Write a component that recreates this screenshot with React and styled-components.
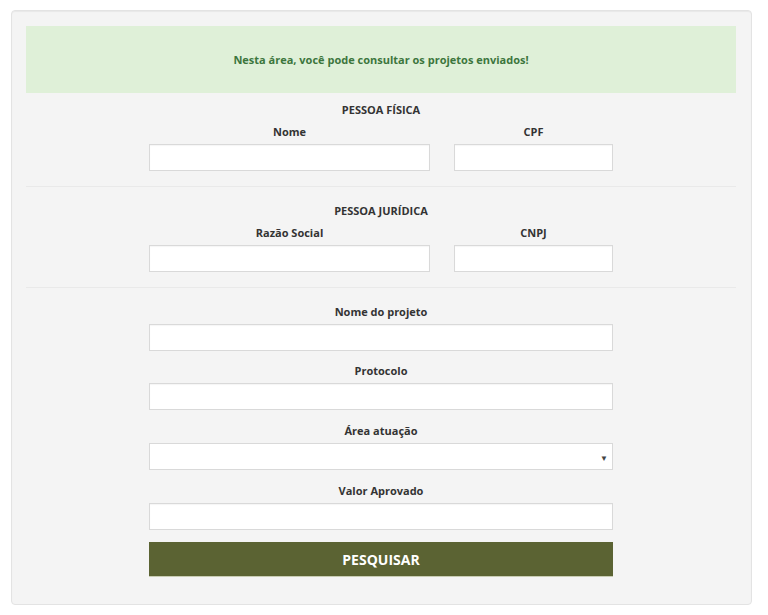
import React from 'react'
import styled, { createGlobalStyle } from 'styled-components'

const Global = createGlobalStyle`
  body {
    margin: 0;
    padding: 10px 16px 0 11px;
    background: #ffffff;
    font-family: "Open Sans", "Liberation Sans", sans-serif;
    color: #333;
  }
  * { box-sizing: border-box; }
`

const Well = styled.div`
  background-color: #f4f4f4;
  border: 1px solid #e3e3e3;
  border-radius: 4px;
  box-shadow: inset 0 1px 1px rgba(0, 0, 0, 0.05);
  padding: 15px 15px 12px 14px;
`

const Alert = styled.div`
  background-color: #dff0d8;
  color: #3c763d;
  height: 67px;
  display: flex;
  align-items: center;
  justify-content: center;
  font-size: 11px;
  font-weight: 700;
`

const Section = styled.div`
  padding: ${({$top}) => $top || 8}px 0 ${({$bottom}) => $bottom ?? 15}px;
  border-bottom: ${({$last}) => $last ? 'none' : '1px solid #e9e9e9'};
`

const Column = styled.div`
  width: 464px;
  margin: 0 auto;
`

const Title = styled.div`
  text-align: center;
  font-size: 11px;
  font-weight: 700;
  line-height: 18px;
  margin-bottom: 4px;
`

const Row = styled.div`
  display: flex;
  gap: 24px;
`

const Group = styled.div`
  flex: ${({$w}) => $w ? `0 0 ${$w}px` : '1'};
  margin-bottom: ${({$mb}) => $mb ?? 12}px;
`

const Label = styled.label`
  display: block;
  text-align: center;
  font-size: 11px;
  font-weight: 700;
  line-height: 18px;
  margin-bottom: 3px;
`

const Input = styled.input`
  display: block;
  width: 100%;
  height: 27px;
  border: 1px solid #d9d9d9;
  border-radius: 0;
  background: #fff;
  box-shadow: inset 0 1px 1px rgba(0, 0, 0, 0.04);
  outline: none;
`

const SelectBox = styled.div`
  position: relative;
  height: 27px;
  border: 1px solid #d9d9d9;
  background: #fff;
`

const Caret = styled.span`
  position: absolute;
  right: 4px;
  top: 50%;
  transform: translateY(-50%);
  font-size: 8px;
  color: #444;
`

const Button = styled.button`
  display: block;
  width: 100%;
  height: 35px;
  border: none;
  border-bottom: 1px solid #c9cdb4;
  background-color: #5b6333;
  color: #fff;
  font-family: "Open Sans", "Liberation Sans", sans-serif;
  font-size: 14px;
  font-weight: 700;
  cursor: pointer;
`

export default function App() {
  return (
    <>
      <Global />
      <Well>
        <Alert>Nesta área, você pode consultar os projetos enviados!</Alert>

        <Section>
          <Column>
            <Title>PESSOA FÍSICA</Title>
            <Row>
              <Group $mb={0}>
                <Label>Nome</Label>
                <Input />
              </Group>
              <Group $w={159} $mb={0}>
                <Label>CPF</Label>
                <Input />
              </Group>
            </Row>
          </Column>
        </Section>

        <Section $top={15}>
          <Column>
            <Title>PESSOA JURÍDICA</Title>
            <Row>
              <Group $mb={0}>
                <Label>Razão Social</Label>
                <Input />
              </Group>
              <Group $w={159} $mb={0}>
                <Label>CNPJ</Label>
                <Input />
              </Group>
            </Row>
          </Column>
        </Section>

        <Section $top={15} $bottom={15} $last>
          <Column>
            <Group $mb={11}>
              <Label>Nome do projeto</Label>
              <Input />
            </Group>
            <Group>
              <Label>Protocolo</Label>
              <Input />
            </Group>
            <Group>
              <Label>Área atuação</Label>
              <SelectBox>
                <Caret>▼</Caret>
              </SelectBox>
            </Group>
            <Group>
              <Label>Valor Aprovado</Label>
              <Input />
            </Group>
            <Button>PESQUISAR</Button>
          </Column>
        </Section>
      </Well>
    </>
  )
}
